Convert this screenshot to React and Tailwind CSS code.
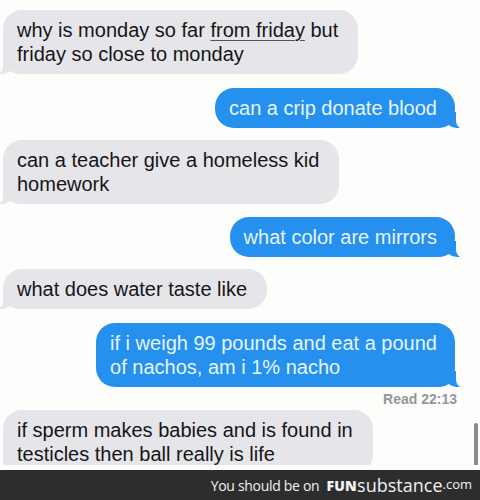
import React from 'react'

const GRAY = '#e5e5ea'
const BLUE = '#2590ee'

function Tail({ side, color }) {
  // iMessage-style tail drawn in the bubble's bottom corner
  const pos = side === 'left' ? 'left-[-4px] bottom-0' : 'right-[-5px] bottom-0 -scale-x-100'
  return (
    <svg className={`absolute ${pos}`} width="22" height="16" viewBox="0 0 22 16">
      <path d="M4 0 L4 8 Q4 13.5 0 16 Q7 16.5 11.5 13 Q15 16 22 16 L22 0 Z" fill={color} />
    </svg>
  )
}

function Incoming({ children, className = '' }) {
  return (
    <div className={`relative self-start ml-[3px] ${className}`}>
      <Tail side="left" color={GRAY} />
      <div className="relative rounded-[19px] bg-[#e5e5ea] pl-[14px] pr-[20px] py-[8px] text-[20px] leading-[24px] text-[#161616] whitespace-nowrap">
        {children}
      </div>
    </div>
  )
}

function Outgoing({ children, className = '' }) {
  return (
    <div className={`relative self-end mr-[25px] ${className}`}>
      <Tail side="right" color={BLUE} />
      <div className="relative rounded-[19px] bg-[#2590ee] pl-[14px] pr-[18px] py-[8px] text-[20px] leading-[24px] text-[#e6f5ff] whitespace-nowrap">
        {children}
      </div>
    </div>
  )
}

export default function App() {
  return (
    <div className="w-[480px] h-[500px] bg-[#fdfdfc] flex flex-col overflow-hidden" style={{ fontFamily: '"Liberation Sans", Arial, sans-serif' }}>
      <div className="relative h-[465px] overflow-hidden flex flex-col pt-[10px]">
        <Incoming>
          why is monday so far{' '}
          <span className="underline decoration-[#555] decoration-1 underline-offset-[3px]">from friday</span> but
          <br />
          friday so close to monday
        </Incoming>
        <Outgoing className="mt-[14px]">can a crip donate blood</Outgoing>
        <Incoming className="mt-[12px]">
          can a teacher give a homeless kid
          <br />
          homework
        </Incoming>
        <Outgoing className="mt-[13px]">what color are mirrors</Outgoing>
        <Incoming className="mt-[12px]">what does water taste like</Incoming>
        <Outgoing className="mt-[14px]">
          if i weigh 99 pounds and eat a pound
          <br />
          of nachos, am i 1% nacho
        </Outgoing>
        <div className="self-end mr-[23px] mt-[4px] text-[14px] leading-[16px] font-semibold text-[#96969b]">Read 22:13</div>
        <Incoming className="mt-[3px]">
          if sperm makes babies and is found in
          <br />
          testicles then ball really is life
        </Incoming>
        <div className="absolute right-[2px] top-[423px] w-[4px] h-[43px] rounded-full bg-[#8c8c8c]" />
      </div>
      <div className="h-[5px] bg-[#fdfdfc]" />
      <div
        className="h-[30px] bg-[#2d2d2d] flex items-center justify-end pr-[8px] text-[#f2f2f2]"
        style={{ fontFamily: '"Open Sans", "Noto Sans", sans-serif' }}
      >
        <span className="text-[14px] tracking-[-0.3px] mr-[7px]">You should be on</span>
        <span className="text-[14px] font-extrabold tracking-[0.3px]">FUN</span>
        <span className="text-[18px] leading-none">substance</span>
        <span className="text-[13px]">.com</span>
      </div>
    </div>
  )
}
